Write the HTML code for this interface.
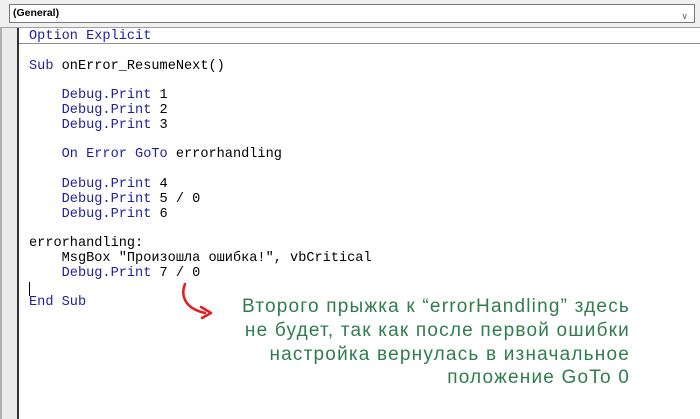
<!DOCTYPE html>
<html><head><meta charset="utf-8"><style>
body{margin:0;width:700px;height:419px;overflow:hidden;background:#fff;position:relative;font-family:"Liberation Sans",sans-serif}
.top{position:absolute;left:0;top:0;width:700px;height:27px;background:#f0f0f0;border-bottom:1px solid #a0a0a0}
.combo{position:absolute;left:9px;top:4px;width:681px;height:17px;background:#fff;border:1px solid #7a7a7a;font-size:10.5px;font-weight:bold;line-height:17px;padding-left:3px;box-sizing:content-box}
.chev{position:absolute;right:6px;top:3px;color:#666;font-size:9px;font-weight:normal}
.gut{position:absolute;left:0;top:28px;width:17px;height:391px;background:#ececec;border-left:2px solid #b0b0b0;box-sizing:border-box}
.gl{position:absolute;left:17px;top:28px;width:2px;height:391px;background:#333}
.sep{position:absolute;left:19px;top:43px;width:681px;height:1px;background:#909090}
pre{position:absolute;left:29px;top:30px;margin:0;font-family:"Liberation Mono",monospace;font-size:13.6px;line-height:14.8px;color:#000}
.k{color:#1f1fa0}
.cur{position:absolute;left:29px;top:282px;width:1px;height:14px;background:#000}
.n{position:absolute;right:70px;color:#2f7d4e;font-size:19px;letter-spacing:1.2px;white-space:nowrap;line-height:24px}
</style></head><body>
<div class="top"><div class="combo">(General)<span class="chev">&#8744;</span></div></div>
<div class="gut"></div><div class="gl"></div><div class="sep"></div>
<pre><span class="k">Option Explicit</span>

<span class="k">Sub</span> onError_ResumeNext()

    <span class="k">Debug.Print</span> 1
    <span class="k">Debug.Print</span> 2
    <span class="k">Debug.Print</span> 3

    <span class="k">On Error GoTo</span> errorhandling

    <span class="k">Debug.Print</span> 4
    <span class="k">Debug.Print</span> 5 / 0
    <span class="k">Debug.Print</span> 6

errorhandling:
    MsgBox "Произошла ошибка!", vbCritical
    <span class="k">Debug.Print</span> 7 / 0

<span class="k">End Sub</span></pre>
<div class="cur"></div>
<svg style="position:absolute;left:175px;top:280px" width="50" height="45">
<path d="M10 4 C6 14 8 28 30 33" stroke="#e02020" stroke-width="2.5" fill="none" stroke-linecap="round"/>
<path d="M26 27 L36 33 L27 38" stroke="#e02020" stroke-width="2.5" fill="none" stroke-linecap="round" stroke-linejoin="round"/>
</svg>
<div class="n" style="top:295px">Второго прыжка к “errorHandling” здесь</div>
<div class="n" style="top:319px">не будет, так как после первой ошибки</div>
<div class="n" style="top:343px">настройка вернулась в изначальное</div>
<div class="n" style="top:366px">положение GoTo 0</div>
</body></html>
